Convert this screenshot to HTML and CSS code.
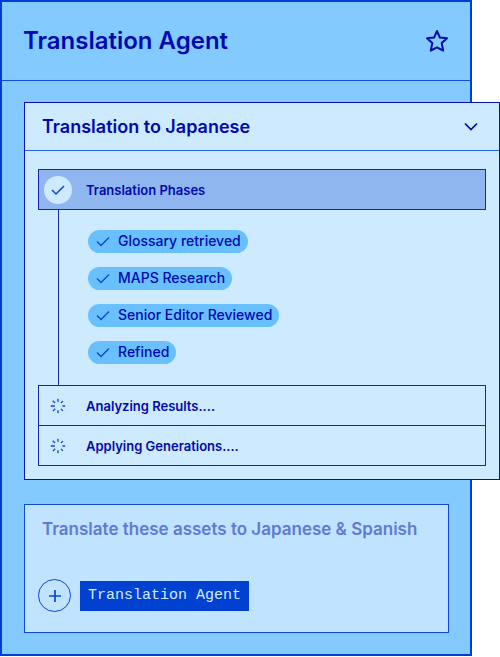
FILE: index.html
```html
<!DOCTYPE html>
<html lang="en">
<head>
  <meta charset="UTF-8">
  <title>Translation Agent</title>
  <link rel="stylesheet" href="styles.css">
</head>
<body>

<main class="agent">
  <header class="agent-header">
    <h1>Translation Agent</h1>
    <button type="button" class="icon-btn" aria-label="Add to favorites">
      <svg width="24" height="24" viewBox="0 0 24 24" fill="none" stroke="currentColor" stroke-width="2" stroke-linejoin="round"><path d="M12 2 L14.9 8.6 L22 9.3 L16.7 14.1 L18.2 21.6 L12 18.3 L5.8 21.6 L7.3 14.1 L2 9.3 L9.1 8.6 Z"/></svg>
    </button>
  </header>

  <!-- Running task -->
  <section class="task">
    <div class="task-header">
      <h2>Translation to Japanese</h2>
      <button type="button" class="icon-btn" aria-label="Collapse">
        <svg width="16" height="16" viewBox="0 0 16 16" fill="none" stroke="currentColor" stroke-width="1.7"><path d="M2 4.5 L8 10.5 L14 4.5"/></svg>
      </button>
    </div>

    <div class="task-body">
      <div class="step step-done">
        <span class="step-icon">
          <svg width="16" height="16" viewBox="0 0 16 16" fill="none" stroke="currentColor" stroke-width="1.5"><path d="M2 8 L6 12 L14 4"/></svg>
        </span>
        <h3>Translation Phases</h3>
      </div>

      <ul class="phases">
        <li><svg width="16" height="16" viewBox="0 0 16 16" fill="none" stroke="currentColor" stroke-width="1.3"><path d="M2 8.5 L6 12.5 L14 4.5"/></svg>Glossary retrieved</li>
        <li><svg width="16" height="16" viewBox="0 0 16 16" fill="none" stroke="currentColor" stroke-width="1.3"><path d="M2 8.5 L6 12.5 L14 4.5"/></svg>MAPS Research</li>
        <li><svg width="16" height="16" viewBox="0 0 16 16" fill="none" stroke="currentColor" stroke-width="1.3"><path d="M2 8.5 L6 12.5 L14 4.5"/></svg>Senior Editor Reviewed</li>
        <li><svg width="16" height="16" viewBox="0 0 16 16" fill="none" stroke="currentColor" stroke-width="1.3"><path d="M2 8.5 L6 12.5 L14 4.5"/></svg>Refined</li>
      </ul>

      <div class="step">
        <span class="step-icon">
          <svg width="16" height="16" viewBox="0 0 16 16" stroke="currentColor" stroke-width="1.3"><path d="M8 .8v3M8 12.2v3M.8 8h4M12.5 8h2.7M2.7 2.7l2.3 2.3M11 11l1.9 1.9M2.9 13.1l2.3-2.3M11 5l1.9-1.9"/></svg>
        </span>
        <h3>Analyzing Results....</h3>
      </div>
      <div class="step">
        <span class="step-icon">
          <svg width="16" height="16" viewBox="0 0 16 16" stroke="currentColor" stroke-width="1.3"><path d="M8 .8v3M8 12.2v3M.8 8h4M12.5 8h2.7M2.7 2.7l2.3 2.3M11 11l1.9 1.9M2.9 13.1l2.3-2.3M11 5l1.9-1.9"/></svg>
        </span>
        <h3>Applying Generations....</h3>
      </div>
    </div>
  </section>

  <!-- Prompt -->
  <form class="prompt">
    <textarea name="prompt" rows="1" aria-label="Prompt" placeholder="Translate these assets to Japanese &amp; Spanish"></textarea>
    <div class="prompt-tools">
      <button type="button" class="add-btn" aria-label="Add">
        <svg width="14" height="14" viewBox="0 0 14 14" stroke="currentColor" stroke-width="1.7"><path d="M7 1v12M1 7h12"/></svg>
      </button>
      <button type="button" class="agent-tag">Translation Agent</button>
    </div>
  </form>
</main>

</body>
</html>
```
FILE: styles.css
```css
* { box-sizing: border-box; }
body { margin: 0; background: #fff; color: #0009ab; font-family: Inter, "Liberation Sans", sans-serif; }
h1, h2, h3 { margin: 0; font-weight: 600; }
svg { display: block; flex: none; }
button { padding: 0; border: none; background: none; color: inherit; cursor: pointer; }

.agent { margin-right: 28px; padding-bottom: 21px; background: #82caff; border: 2px solid #003fd6; }
.agent-header { display: flex; align-items: center; justify-content: space-between; height: 79px; padding: 0 21px; border-bottom: 1px solid #0f4fe0; }
.agent-header h1 { font-size: 24px; line-height: 28px; }

/* the task card sticks out past the right edge of the panel */
.task { position: relative; margin: 21px -30px 0 22px; background: #cdeaff; border: 1px solid #0a12ad; }
.task-header { display: flex; align-items: center; justify-content: space-between; height: 48px; padding: 0 20px 0 17px; border-bottom: 1px solid #2563e8; }
.task-header h2 { font-size: 18px; line-height: 24px; }
.task-body { padding: 18px 13px 13px; }

.step { display: flex; align-items: center; gap: 14px; height: 41px; padding-left: 5px; border: 1px solid #1a22b8; }
.step + .step { margin-top: -1px; }
.step h3 { font-size: 13px; line-height: 20px; }
.step-icon { display: grid; place-items: center; width: 28px; height: 28px; border-radius: 50%; color: #0a44d8; }
.step-done { background: #90b6f0; }
.step-done .step-icon { background: #cdeaff; }

.phases { display: flex; flex-direction: column; align-items: flex-start; gap: 14px; margin: 0 0 0 20px; padding: 20px 0 21px 29px; border-left: 1px solid #1a22b8; list-style: none; }
.phases li { display: flex; align-items: center; gap: 7px; height: 23px; padding: 0 7px 2px; border-radius: 12px; background: #69c0ff; font-size: 14px; font-weight: 500; line-height: 20px; }
.phases svg { color: #0a44d8; }

.prompt { margin: 24px 21px 0 22px; padding: 12px 16px 20px 13px; background: #c0e4ff; border: 1px solid #0f48dc; }
.prompt textarea { display: block; width: 100%; height: 24px; margin: 0; padding: 0 0 0 4px; border: none; outline: none; resize: none; overflow: hidden; background: none; color: #0009ab; font-family: inherit; font-size: 17px; font-weight: 600; line-height: 24px; }
.prompt textarea::placeholder { color: #6079d5; opacity: 1; }
.prompt-tools { display: flex; align-items: center; gap: 9px; margin-top: 38px; }
.add-btn { display: grid; place-items: center; width: 33px; height: 33px; border: 1px solid #0a44d8; border-radius: 50%; color: #0a44d8; }
.agent-tag { height: 30px; padding: 0 8px; background: #0041d2; color: #d5edff; font-family: "Liberation Mono", monospace; font-size: 15px; }
```
